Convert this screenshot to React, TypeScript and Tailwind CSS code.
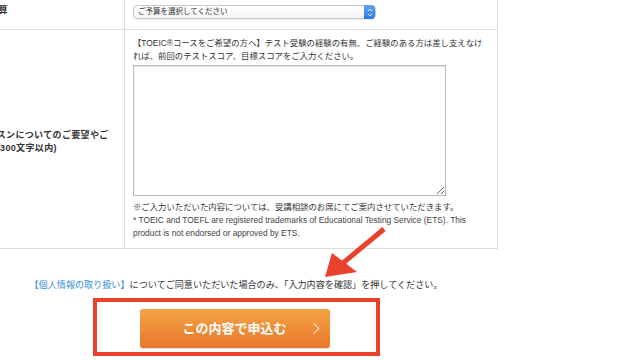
import { ChevronRight } from 'lucide-react';

const FONT = {
  fontFamily: '"Liberation Sans", "Noto Sans CJK JP", sans-serif',
};

export default function App() {
  return (
    <div
      className="relative h-[360px] w-[640px] overflow-hidden bg-white text-[#333]"
      style={FONT}
    >
      {/* Form table */}
      <div className="-mt-[8px] ml-[-40px] w-[538px] border-r border-b border-[#dddddd]">
        {/* Budget row */}
        <div className="flex border-b border-[#dddddd]">
          <div className="flex w-[165px] shrink-0 items-center border-r border-[#dddddd] pl-[20px] text-[9px] font-bold tracking-[0.3px]">
            ご予算
          </div>
          <div className="flex-1 pt-[13px] pb-[10px] pl-[8px]">
            <div className="flex h-[14px] w-[243px] items-center justify-between rounded-[4px] border border-[#c8c8c8] bg-gradient-to-b from-white to-[#f4f4f4] pl-[4px] shadow-[0_1px_1px_rgba(0,0,0,0.08)]">
              <span className="text-[7.5px] leading-none text-[#333]">
                ご予算を選択してください
              </span>
              <span className="flex h-[14px] w-[11px] flex-col items-center justify-center rounded-r-[4px] bg-gradient-to-b from-[#5ea2f7] to-[#2c78ea]">
                <svg width="6" height="9" viewBox="0 0 6 9" fill="none">
                  <path d="M1 3.2 L3 1.2 L5 3.2" stroke="white" strokeWidth="1" />
                  <path d="M1 5.8 L3 7.8 L5 5.8" stroke="white" strokeWidth="1" />
                </svg>
              </span>
            </div>
          </div>
        </div>

        {/* Comment row */}
        <div className="flex">
          <div className="flex w-[165px] shrink-0 items-center border-r border-[#dddddd] pl-[18px] pr-[10px] text-[9px] font-bold leading-[13px] tracking-[0.35px]">
            <span className="pt-[6px]">レッスンについてのご要望やご質問(300文字以内)</span>
          </div>
          <div className="flex-1 pt-[7px] pb-[8px] pl-[8px] pr-[8px]">
            <p className="text-[8.4px] leading-[13px]">
              【TOEIC®コースをご希望の方へ】テスト受験の経験の有無、ご経験のある方は差し支えなければ、前回のテストスコア、目標スコアをご入力ください。
            </p>
            <textarea
              className="mt-[2px] block h-[131px] w-[313px] resize border border-[#b9b9b9] bg-white shadow-[inset_0_1px_1px_rgba(0,0,0,0.12)]"
              aria-label="ご要望"
            />
            <p className="mt-[5px] text-[8.4px] leading-[13px]">
              ※ご入力いただいた内容については、受講相談のお席にてご案内させていただきます。
            </p>
            <p className="pr-[12px] text-[8.4px] leading-[13px] text-[#444]">
              * TOEIC and TOEFL are registered trademarks of Educational Testing Service (ETS). This product is not endorsed or approved by ETS.
            </p>
          </div>
        </div>
      </div>

      {/* Agreement + submit */}
      <div className="flex w-[472px] flex-col items-center">
        <p className="mt-[30px] text-[9.1px] leading-[13px]">
          <span className="text-[#3b8fd6]">【個人情報の取り扱い】</span>
          についてご同意いただいた場合のみ、「入力内容を確認」を押してください。
        </p>
        <div className="mt-[6px] flex h-[58px] w-[287px] items-start border-[4px] border-[#e8412c] pt-[7px] pl-[43px]">
          <button
            type="button"
            className="relative flex h-[39px] w-[190px] items-center justify-center rounded-[3px] bg-gradient-to-b from-[#f3a344] to-[#e8772b] text-[13px] font-bold text-white shadow-[0_1px_1px_rgba(0,0,0,0.15)]"
          >
            <span>この内容で申込む</span>
            <ChevronRight
              className="absolute right-[4px] top-[10px]"
              size={19}
              strokeWidth={1.3}
            />
          </button>
        </div>
      </div>

      {/* Annotation arrow */}
      <svg
        className="pointer-events-none absolute left-0 top-0"
        width="640"
        height="360"
        viewBox="0 0 640 360"
      >
        <line x1="384" y1="229" x2="343" y2="263" stroke="#e8412c" strokeWidth="5" />
        <polygon points="325,277 332,253 357,272" fill="#e8412c" />
      </svg>
    </div>
  );
}
